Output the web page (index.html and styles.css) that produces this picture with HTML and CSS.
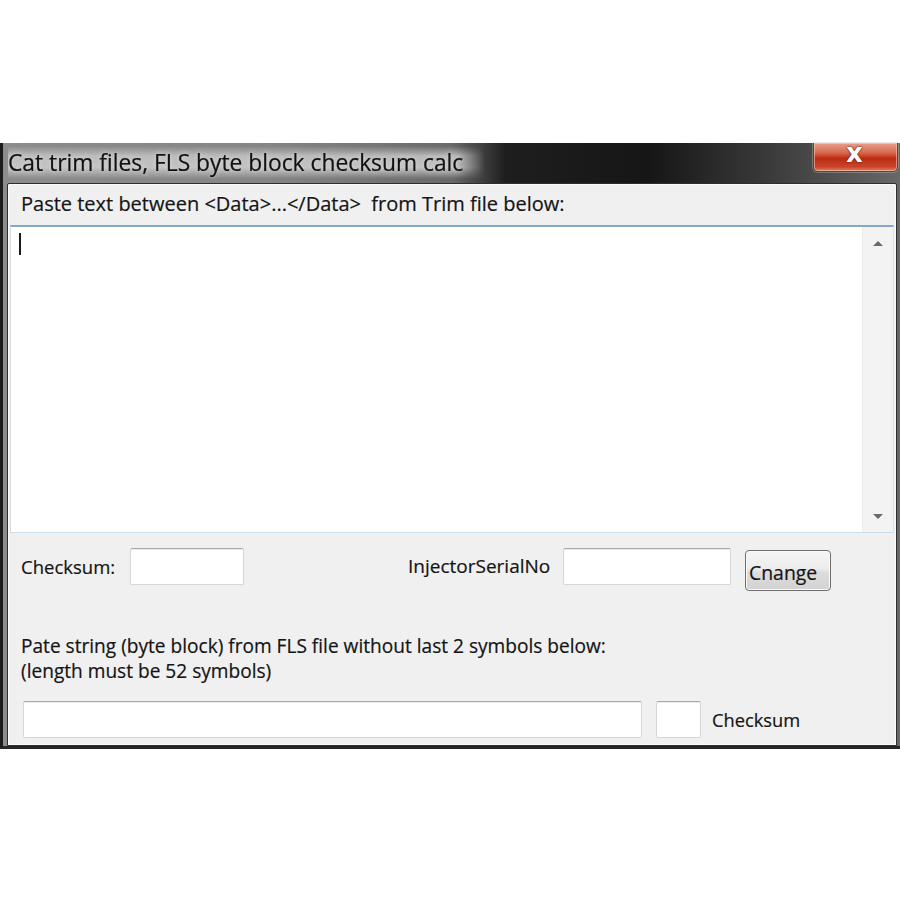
FILE: index.html
```html
<!DOCTYPE html>
<html>
<head>
<meta charset="utf-8">
<link rel="stylesheet" href="styles.css">
</head>
<body>
<div class="window">
  <div class="titlebar">
    <div class="title">Cat trim files, FLS byte block checksum calc</div>
    <div class="close"><span>x</span></div>
  </div>
  <div class="client">
    <div class="hint">Paste text between &lt;Data&gt;...&lt;/Data&gt;&nbsp; from Trim file below:</div>
    <div class="memo">
      <div class="memo-text"><span class="caret"></span></div>
      <div class="scrollbar">
        <div class="sb-btn"><svg width="12" height="7" viewBox="0 0 12 7"><path d="M1 6 L6 1 L11 6 Z" fill="#6a6a6a"/></svg></div>
        <div class="sb-btn"><svg width="12" height="7" viewBox="0 0 12 7"><path d="M1 1 L6 6 L11 1 Z" fill="#6a6a6a"/></svg></div>
      </div>
    </div>
    <div class="row row-top">
      <span class="lbl lbl-cs">Checksum:</span>
      <div class="edit edit-cs"></div>
      <span class="lbl lbl-inj">InjectorSerialNo</span>
      <div class="edit edit-inj"></div>
      <button class="btn">Cnange</button>
    </div>
    <div class="note">
      <div>Pate string (byte block) from FLS file without last 2 symbols below:</div>
      <div>(length must be 52 symbols)</div>
    </div>
    <div class="row row-bottom">
      <div class="edit edit-str"></div>
      <div class="edit edit-sum"></div>
      <span class="lbl lbl-sum">Checksum</span>
    </div>
  </div>
</div>
</body>
</html>
```

FILE: styles.css
```css
html, body {
  margin: 0;
  padding: 0;
  background: #ffffff;
}
body {
  font-family: "Open Sans", "Noto Sans", "DejaVu Sans", sans-serif;
  color: #141414;
}
.window {
  margin-top: 143px;
  width: 890px;
  height: 603px;
  padding: 0 3px 0 4px;
  border-left: 3px solid #1c1c1c;
  border-right: 2px solid #2a2a2a;
  border-bottom: 3px solid #262626;
  background: linear-gradient(to right, #8c8c8c 0%, #858585 30%, #6a6a6a 50%, #1e1e1e 56%, #161616 72%, #3c3c3c 86%, #686868 100%);
  display: flex;
  flex-direction: column;
}
.titlebar {
  height: 40px;
  display: flex;
  align-items: flex-start;
  flex-shrink: 0;
}
.title {
  margin-left: 1px;
  margin-top: 3px;
  font-size: 22.8px;
  line-height: 33px;
  color: #111;
  white-space: nowrap;
  padding: 0 22px 0 0;
  background: linear-gradient(to bottom, rgba(200,200,200,0) 0%, rgba(196,196,196,0.85) 30%, rgba(200,200,200,0.9) 65%, rgba(180,180,180,0) 100%);
  -webkit-mask-image: linear-gradient(to right, #000 0%, #000 94%, transparent 100%);
  mask-image: linear-gradient(to right, #000 0%, #000 94%, transparent 100%);
  text-shadow: 0 0 5px #dcdcdc;
  -webkit-text-stroke: 0.2px #111;
}
.close {
  margin-left: auto;
  margin-right: -1px;
  width: 85px;
  height: 29px;
  box-sizing: border-box;
  border: 1px solid #4a4a4a;
  border-top: none;
  border-radius: 0 0 5px 5px;
  background: linear-gradient(to bottom, #e8a08e 0%, #d8684f 35%, #bd2c12 55%, #c9442a 85%, #e0805f 100%);
  box-shadow: inset 0 0 0 1px rgba(255,220,200,0.5), 0 0 0 1px rgba(200,200,200,0.35);
  display: flex;
  justify-content: center;
  align-items: flex-start;
}
.close span {
  font-family: "DejaVu Sans", sans-serif;
  font-weight: bold;
  color: #ffffff;
  font-size: 26px;
  line-height: 20px;
  margin-left: -2px;
  text-shadow: 0 0 2px #6a1a0a, 0 0 1px #3a0a00;
}
.client {
  flex: 1;
  background: #f0f0f0;
  border: 1px solid #2e2e2e;
  box-shadow: inset 0 0 0 1px #fbfbfb;
  border-radius: 2px 2px 0 0;
  padding: 1px 1px 0 1px;
  display: flex;
  flex-direction: column;
  -webkit-text-stroke: 0.2px #141414;
}
.hint {
  height: 40px;
  line-height: 38px;
  padding-left: 12px;
  font-size: 20px;
  white-space: nowrap;
  flex-shrink: 0;
}
.memo {
  height: 308px;
  box-sizing: border-box;
  margin: 0 1px;
  border-top: 2px solid #86a9c9;
  border-left: 1px solid #dadada;
  border-right: 1px solid #e2e2e2;
  border-bottom: 1px solid #c8dcec;
  background: #ffffff;
  display: flex;
  flex-shrink: 0;
}
.memo-text {
  flex: 1;
  padding: 6px 0 0 8px;
}
.caret {
  display: block;
  width: 2px;
  height: 22px;
  background: #1a1a1a;
}
.scrollbar {
  width: 30px;
  background: #f3f3f3;
  border-left: 1px solid #ececec;
  display: flex;
  flex-direction: column;
  justify-content: space-between;
}
.sb-btn {
  height: 32px;
  display: flex;
  align-items: center;
  justify-content: center;
}
.row {
  display: flex;
  align-items: flex-start;
  flex-shrink: 0;
}
.row-top {
  margin-top: 15px;
  height: 43px;
  padding-left: 12px;
}
.lbl {
  font-size: 18.5px;
  line-height: 37px;
  white-space: nowrap;
}
.lbl-cs {
  width: 109px;
}
.lbl-inj {
  margin-left: 164px;
  width: 155px;
  font-size: 19px;
}
.edit {
  height: 37px;
  box-sizing: border-box;
  background: #ffffff;
  border: 1px solid #d6d6d6;
  border-top-color: #a9a9a9;
  border-radius: 2px;
  box-shadow: inset 0 1px 0 #ececec;
}
.edit-cs {
  width: 114px;
}
.edit-inj {
  width: 168px;
}
.btn {
  margin-left: 14px;
  margin-top: 2px;
  width: 86px;
  height: 41px;
  box-sizing: border-box;
  border: 1px solid #6f6f6f;
  border-radius: 4px;
  background: linear-gradient(to bottom, #f6f6f6 0%, #ececec 45%, #dddddd 55%, #d2d2d2 100%);
  box-shadow: inset 0 0 0 1px #fafafa;
  font-family: "Open Sans", "Noto Sans", sans-serif;
  font-size: 19.4px;
  color: #141414;
  -webkit-text-stroke: 0.2px #141414;
  text-align: left;
  padding: 3px 0 0 3px;
  white-space: nowrap;
}
.note {
  margin-top: 43px;
  padding-left: 12px;
  font-size: 19.1px;
  line-height: 25px;
  white-space: nowrap;
  flex-shrink: 0;
}
.row-bottom {
  margin-top: 17px;
  padding-left: 14px;
}
.edit-str {
  width: 619px;
}
.edit-sum {
  margin-left: 14px;
  width: 45px;
}
.lbl-sum {
  margin-left: 11px;
  font-size: 18.3px;
}
```
